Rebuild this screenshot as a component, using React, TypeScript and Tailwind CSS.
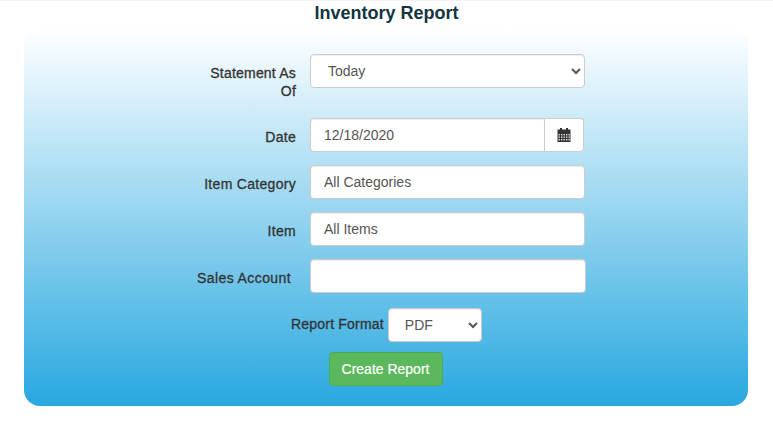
import React from 'react';

const inputClass =
  'h-[34px] bg-white border border-[#ccc] rounded-[4px] px-[13px] text-[14px] text-[#555] shadow-[inset_0_1px_1px_rgba(0,0,0,0.075)] outline-none';
const labelText = 'text-[14px] leading-[18px] text-[#333] [-webkit-text-stroke:0.3px_#333]';
const labelClass = `w-[110px] shrink-0 text-right tracking-[0.3px] ${labelText}`;

const CalendarIcon = () => (
  <svg width="14" height="14" viewBox="0 0 14 14" aria-hidden="true">
    <rect x="0.5" y="1.5" width="13" height="12.5" fill="#333" />
    <rect x="3" y="0" width="2" height="3" fill="#333" />
    <rect x="9" y="0" width="2" height="3" fill="#333" />
    {[6, 8.5, 11].map((y) =>
      [1.5, 4, 6.5, 9, 11.5].map((x) => (
        <rect key={`${x}-${y}`} x={x} y={y} width="1.4" height="1.4" fill="#e8e8e8" />
      ))
    )}
  </svg>
);

export default function App() {
  return (
    <div className="h-[434px] bg-white font-['Liberation_Sans',Arial,sans-serif] overflow-hidden">
      <div className="h-px bg-[#f2f2f2]" />
      <h1 className="h-[27px] text-center text-[18px] leading-[24px] font-bold text-[#12343f]">Inventory Report</h1>
      <div className="ml-6 w-[724px] h-[378px] rounded-[16px] bg-[linear-gradient(to_bottom,#ffffff,#29a8e0)] pt-[26px]">
        <form className="flex flex-col">
          <div className="flex items-start">
            <label className={`${labelClass} !tracking-[0.2px] mt-[10px] ml-[162px] pl-[16px]`}>Statement As Of</label>
            <select className={`${inputClass} ml-[14px] w-[275px] !pl-[13px] !pr-[12px]`} defaultValue="Today">
              <option>Today</option>
            </select>
          </div>

          <div className="flex items-center mt-[18px]">
            <label className={`${labelClass} ml-[162px] pt-[4px]`}>Date</label>
            <div className="flex ml-[14px] w-[274px]">
              <input className={`${inputClass} flex-1 min-w-0 rounded-r-none`} defaultValue="12/18/2020" readOnly />
              <span className="w-[39px] h-[34px] flex items-center justify-center bg-white border border-l-0 border-[#ccc] rounded-r-[4px]">
                <CalendarIcon />
              </span>
            </div>
          </div>

          <div className="flex items-center mt-[13px]">
            <label className={`${labelClass} ml-[162px] pt-[4px]`}>Item Category</label>
            <input className={`${inputClass} ml-[14px] w-[275px]`} defaultValue="All Categories" readOnly />
          </div>

          <div className="flex items-center mt-[13px]">
            <label className={`${labelClass} ml-[162px] pt-[4px]`}>Item</label>
            <input className={`${inputClass} ml-[14px] w-[275px]`} defaultValue="All Items" readOnly />
          </div>

          <div className="flex items-center mt-[13px]">
            <label className={`${labelClass} !tracking-[0.4px] ml-[157px] pt-[4px]`}>Sales Account</label>
            <input className={`${inputClass} ml-[19px] w-[276px]`} readOnly />
          </div>

          <div className="flex items-center gap-[4px] mt-[15px] ml-[267px]">
            <label className={`${labelText} tracking-[0.2px] pb-[2px]`}>Report Format</label>
            <select className={`${inputClass} w-[94px] !pl-[12px] !pr-[12px]`} defaultValue="PDF">
              <option>PDF</option>
            </select>
          </div>

          <div className="flex justify-center mt-[10px] pr-[1px]">
            <button
              type="button"
              className="w-[114px] h-[34px] rounded-[4px] bg-[#5cb85c] border border-[#4cae4c] text-white text-[14px] [-webkit-text-stroke:0.2px_#fff]"
            >
              Create Report
            </button>
          </div>
        </form>
      </div>
    </div>
  );
}
